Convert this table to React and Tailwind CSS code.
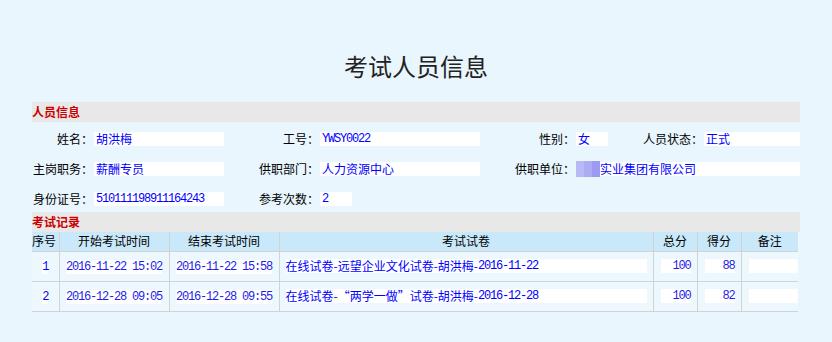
import React from 'react'

const cjk = "font-['Noto_Sans_CJK_SC',sans-serif]"
const mono = "font-['Liberation_Mono',monospace] text-[12px] tracking-[-1.2px]"

const records = [
  {
    id: '1',
    start: '2016-11-22 15:02',
    end: '2016-11-22 15:58',
    paper: '在线试卷-远望企业文化试卷-胡洪梅-',
    paperDate: '2016-11-22',
    total: '100',
    score: '88',
  },
  {
    id: '2',
    start: '2016-12-28 09:05',
    end: '2016-12-28 09:55',
    paper: '在线试卷-“两学一做”试卷-胡洪梅-',
    paperDate: '2016-12-28',
    total: '100',
    score: '82',
  },
]

function SectionBar({ title }) {
  return (
    <div className="h-[20px] bg-[#e8e8e8] flex items-center">
      <span className="text-[12px] leading-[14px] font-bold text-[#cc0000]">
        {title}
      </span>
    </div>
  )
}

function Label({ children }) {
  return (
    <div className="text-right pr-[1px] text-[12px] leading-[14px] text-black">
      {children}
    </div>
  )
}

function Value({ children, isMono, className = '' }) {
  return (
    <div
      className={`bg-white h-[14px] flex items-center text-[#0000ff] pl-[2px] ${
        isMono ? mono : 'text-[12px] leading-[14px]'
      } ${className}`}
    >
      {children}
    </div>
  )
}

export default function App() {
  return (
    <div className={`${cjk} bg-[#e9f6fd] w-[832px] h-[342px] overflow-hidden`}>
      <div className="w-[768px] mx-auto pt-[48px]">
        <h1 className="h-[36px] leading-[36px] text-center text-[24px] text-[#222222] mb-[18px]">
          考试人员信息
        </h1>

        <SectionBar title="人员信息" />
        <div className="grid grid-cols-[62px_130px_96px_160px_96px_32px_96px_96px] auto-rows-[14px] gap-y-[16px] items-center pt-[10px]">
          <Label>姓名：</Label>
          <Value>胡洪梅</Value>
          <Label>工号：</Label>
          <Value isMono>YWSY0022</Value>
          <Label>性别：</Label>
          <Value>女</Value>
          <Label>人员状态：</Label>
          <Value>正式</Value>

          <Label>主岗职务：</Label>
          <Value>薪酬专员</Value>
          <Label>供职部门：</Label>
          <Value>人力资源中心</Value>
          <Label>供职单位：</Label>
          <Value className="col-span-3 !pl-0">
            <div className="flex h-[16px] -my-[1px]">
              <div className="w-[8px] bg-[#b9b9f8]" />
              <div className="w-[8px] bg-[#acacf5]" />
              <div className="w-[8px] bg-[#9b9bf2]" />
            </div>
            实业集团有限公司
          </Value>

          <Label>身份证号：</Label>
          <Value isMono>510111198911164243</Value>
          <Label>参考次数：</Label>
          <div>
            <Value isMono className="w-[32px]">
              2
            </Value>
          </div>
        </div>

        <div className="mt-[6px]">
          <SectionBar title="考试记录" />
        </div>
        <table className="table-fixed border-collapse w-[766px] text-[12px]">
          <colgroup>
            <col className="w-[27px]" />
            <col className="w-[110px]" />
            <col className="w-[110px]" />
            <col className="w-[374px]" />
            <col className="w-[44px]" />
            <col className="w-[44px]" />
            <col className="w-[57px]" />
          </colgroup>
          <thead>
            <tr className="h-[19px] bg-[#c9e9fb] text-black leading-[14px]">
              <th className="font-normal text-left border-r border-b border-[#d2d2d2]">序号</th>
              <th className="font-normal border-x border-b border-[#d2d2d2]">开始考试时间</th>
              <th className="font-normal border-x border-b border-[#d2d2d2]">结束考试时间</th>
              <th className="font-normal border-x border-b border-[#d2d2d2]">考试试卷</th>
              <th className="font-normal border-x border-b border-[#d2d2d2]">总分</th>
              <th className="font-normal border-x border-b border-[#d2d2d2]">得分</th>
              <th className="font-normal border-l border-b border-[#d2d2d2]">备注</th>
            </tr>
          </thead>
          <tbody>
            {records.map((r) => (
              <tr key={r.id} className="h-[30px] bg-[#edf8fe]">
                <td className="border-r border-b border-[#d2d2d2] text-center">
                  <span className={`bg-white text-[#0000ff] ${mono}`}>{r.id}</span>
                </td>
                <td className="border-x border-b border-[#d2d2d2] text-center">
                  <span className={`bg-white text-[#1d1de8] ${mono}`}>{r.start}</span>
                </td>
                <td className="border-x border-b border-[#d2d2d2] text-center">
                  <span className={`bg-white text-[#1d1de8] ${mono}`}>{r.end}</span>
                </td>
                <td className="border-x border-b border-[#d2d2d2] px-[6px]">
                  <div className="bg-white h-[14px] flex items-center text-[#0000ff] leading-[14px]">
                    {r.paper}
                    <span className={mono}>{r.paperDate}</span>
                  </div>
                </td>
                <td className="border-x border-b border-[#d2d2d2] pl-[7px] pr-[6px]">
                  <div className={`bg-white h-[14px] flex items-center justify-end text-[#1d1de8] ${mono}`}>
                    {r.total}
                  </div>
                </td>
                <td className="border-x border-b border-[#d2d2d2] pl-[7px] pr-[6px]">
                  <div className={`bg-white h-[14px] flex items-center justify-end text-[#1d1de8] ${mono}`}>
                    {r.score}
                  </div>
                </td>
                <td className="border-l border-b border-[#d2d2d2] pl-[7px]">
                  <div className="bg-white h-[14px]" />
                </td>
              </tr>
            ))}
          </tbody>
        </table>
      </div>
    </div>
  )
}
